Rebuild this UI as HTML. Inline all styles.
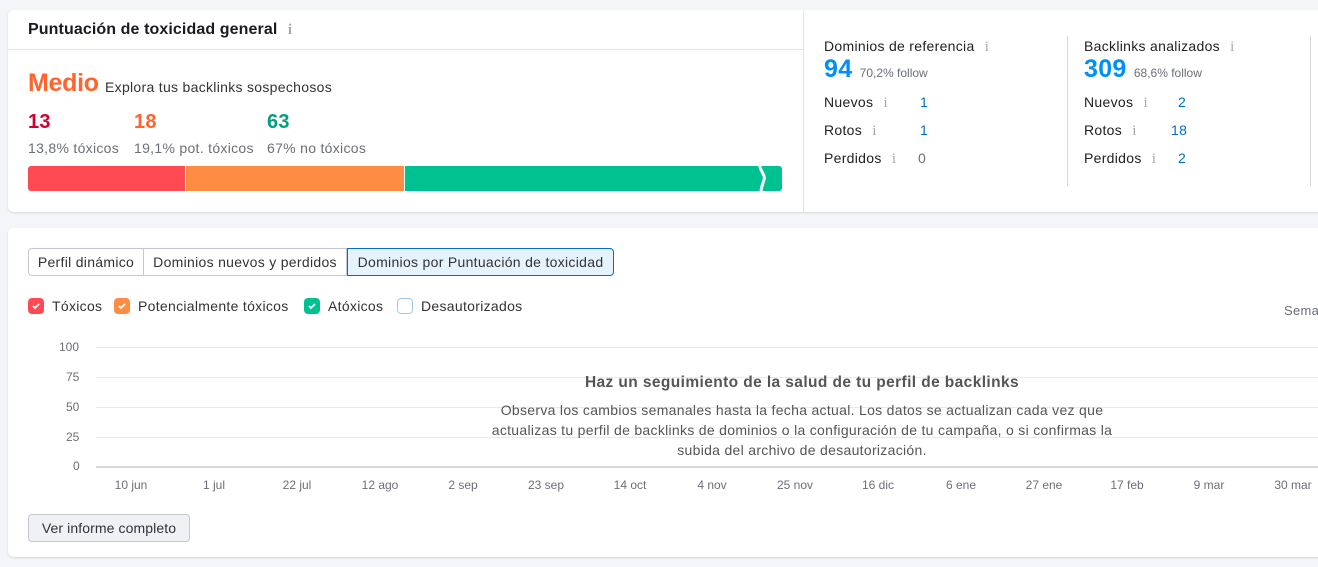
<!DOCTYPE html><html><head><meta charset="utf-8"><style>
*{margin:0;padding:0;box-sizing:border-box}
body{width:1318px;height:567px;background:#f4f5f9;font-family:"Liberation Sans",sans-serif;color:#222;position:relative;overflow:hidden;letter-spacing:.3px}
.a{position:absolute;white-space:nowrap}
.card{position:absolute;background:#fff;border-radius:6px;box-shadow:0 1px 2px rgba(0,0,0,.12)}
.i{color:#a6a9b2;font-family:"Liberation Serif",serif;font-size:15px;margin-left:6px}
.g{color:#6c6e79}
.bl{color:#006dca}
.cb{position:absolute;width:16px;height:16px;border-radius:4px;top:298px}
.cb svg{position:absolute;left:3px;top:3px}
.gl{position:absolute;left:96px;right:0;height:1px;background:#e8e9ee}
.xl{position:absolute;top:478px;font-size:12px;color:#6c6e79;transform:translateX(-50%);white-space:nowrap;letter-spacing:0}
.yl{position:absolute;font-size:12px;color:#6c6e79;letter-spacing:0}
</style></head><body>
<div class="card" style="left:8px;top:10px;width:1330px;height:202px"></div>
<div class="a" style="left:8px;top:49px;width:795px;height:1px;background:#e3e4e8"></div>
<div class="a" style="left:803px;top:10px;width:1px;height:202px;background:#e3e4e8"></div>
<div class="a" style="left:28px;top:21px;font-size:16px;font-weight:bold;color:#191b23;letter-spacing:.1px">Puntuación de toxicidad general <span class="i">i</span></div>
<div class="a" style="left:28px;top:69px;font-size:25px;font-weight:bold;color:#ff642d;letter-spacing:-.3px">Medio</div>
<div class="a" style="left:105px;top:79px;font-size:14px;color:#333">Explora tus backlinks sospechosos</div>
<div class="a" style="left:28px;top:111px;font-size:20px;font-weight:bold;color:#d1002f">13</div>
<div class="a" style="left:134px;top:111px;font-size:20px;font-weight:bold;color:#ff642d">18</div>
<div class="a" style="left:267px;top:111px;font-size:20px;font-weight:bold;color:#009f81">63</div>
<div class="a g" style="left:28px;top:140px;font-size:14px">13,8% tóxicos</div>
<div class="a g" style="left:134px;top:140px;font-size:14px">19,1% pot. tóxicos</div>
<div class="a g" style="left:267px;top:140px;font-size:14px">67% no tóxicos</div>
<div class="a" style="left:28px;top:166px;width:157px;height:25px;background:#ff4953;border-radius:3px 0 0 3px"></div>
<div class="a" style="left:186px;top:166px;width:218px;height:25px;background:#ff8c43"></div>
<div class="a" style="left:405px;top:166px;width:377px;height:25px;background:#00c291;border-radius:0 3px 3px 0"></div>
<svg class="a" style="left:752px;top:160px" width="20" height="38"><path d="M8 2 C6 10,14 14,12 20 C10 26,8 30,10 36" stroke="#fff" stroke-width="3" fill="none"/></svg>

<div class="a" style="left:824px;top:38px;font-size:14px;color:#222">Dominios de referencia <span class="i">i</span></div>
<div class="a" style="left:824px;top:55px;font-size:25px;font-weight:bold;color:#008ff8">94 <span style="font-size:12px;font-weight:normal;color:#6c6e79;letter-spacing:0">70,2% follow</span></div>
<div class="a" style="left:824px;top:94px;font-size:14px">Nuevos <span class="i">i</span></div><div class="a bl" style="left:920px;top:94px;font-size:14px">1</div>
<div class="a" style="left:824px;top:122px;font-size:14px">Rotos <span class="i">i</span></div><div class="a bl" style="left:920px;top:122px;font-size:14px">1</div>
<div class="a" style="left:824px;top:150px;font-size:14px">Perdidos <span class="i">i</span></div><div class="a g" style="left:918px;top:150px;font-size:14px">0</div>
<div class="a" style="left:1067px;top:36px;width:1px;height:150px;background:#d6d8de"></div>
<div class="a" style="left:1084px;top:38px;font-size:14px">Backlinks analizados <span class="i">i</span></div>
<div class="a" style="left:1084px;top:55px;font-size:25px;font-weight:bold;color:#008ff8">309 <span style="font-size:12px;font-weight:normal;color:#6c6e79;letter-spacing:0">68,6% follow</span></div>
<div class="a" style="left:1084px;top:94px;font-size:14px">Nuevos <span class="i">i</span></div><div class="a bl" style="left:1178px;top:94px;font-size:14px">2</div>
<div class="a" style="left:1084px;top:122px;font-size:14px">Rotos <span class="i">i</span></div><div class="a bl" style="left:1171px;top:122px;font-size:14px">18</div>
<div class="a" style="left:1084px;top:150px;font-size:14px">Perdidos <span class="i">i</span></div><div class="a bl" style="left:1178px;top:150px;font-size:14px">2</div>
<div class="a" style="left:1310px;top:36px;width:1px;height:150px;background:#d6d8de"></div>

<div class="card" style="left:8px;top:228px;width:1330px;height:329px"></div>
<div class="a" style="left:28px;top:248px;height:28px;display:flex;font-size:14px;color:#333">
<div style="width:116px;text-align:center;border:1px solid #c4c7cf;border-radius:4px 0 0 4px;line-height:26px">Perfil dinámico</div>
<div style="width:203px;text-align:center;border:1px solid #c4c7cf;border-left:none;line-height:26px">Dominios nuevos y perdidos</div>
<div style="width:267px;text-align:center;border:1px solid #006dca;background:#e5f3ff;border-radius:0 4px 4px 0;line-height:26px">Dominios por Puntuación de toxicidad</div></div>
<div class="cb" style="left:28px;background:#ff4953"><svg width="10" height="10"><path d="M2 5l2 2 4-4" stroke="#fff" stroke-width="1.8" fill="none"/></svg></div>
<div class="a" style="left:52px;top:298px;font-size:14px;color:#333">Tóxicos</div>
<div class="cb" style="left:114px;background:#ff8c43"><svg width="10" height="10"><path d="M2 5l2 2 4-4" stroke="#fff" stroke-width="1.8" fill="none"/></svg></div>
<div class="a" style="left:138px;top:298px;font-size:14px;color:#333">Potencialmente tóxicos</div>
<div class="cb" style="left:304px;background:#00c291"><svg width="10" height="10"><path d="M2 5l2 2 4-4" stroke="#fff" stroke-width="1.8" fill="none"/></svg></div>
<div class="a" style="left:328px;top:298px;font-size:14px;color:#333">Atóxicos</div>
<div class="cb" style="left:397px;border:1px solid #9bc9f4;background:#fff"></div>
<div class="a" style="left:421px;top:298px;font-size:14px;color:#333">Desautorizados</div>
<div class="a g" style="left:1284px;top:303px;font-size:13px">Semanas</div>

<div class="gl" style="top:347px"></div><div class="gl" style="top:377px"></div><div class="gl" style="top:407px"></div><div class="gl" style="top:437px"></div><div class="gl" style="top:466px;height:2px;background:#d6d8de"></div>
<div class="yl" style="top:340px;left:59px">100</div><div class="yl" style="top:370px;left:66px">75</div><div class="yl" style="top:400px;left:66px">50</div><div class="yl" style="top:430px;left:66px">25</div><div class="yl" style="top:459px;left:73px">0</div>
<div class="xl" style="left:131px">10 jun</div><div class="xl" style="left:214px">1 jul</div><div class="xl" style="left:297px">22 jul</div><div class="xl" style="left:380px">12 ago</div><div class="xl" style="left:463px">2 sep</div><div class="xl" style="left:546px">23 sep</div><div class="xl" style="left:630px">14 oct</div><div class="xl" style="left:712px">4 nov</div><div class="xl" style="left:795px">25 nov</div><div class="xl" style="left:878px">16 dic</div><div class="xl" style="left:961px">6 ene</div><div class="xl" style="left:1044px">27 ene</div><div class="xl" style="left:1127px">17 feb</div><div class="xl" style="left:1209px">9 mar</div><div class="xl" style="left:1293px">30 mar</div>
<div class="a" style="left:802px;top:374px;transform:translateX(-50%);font-size:15.5px;font-weight:bold;color:#555;letter-spacing:.4px">Haz un seguimiento de la salud de tu perfil de backlinks</div>
<div class="a" style="left:802px;top:400px;transform:translateX(-50%);font-size:14px;color:#555;text-align:center;line-height:20px;white-space:normal;width:645px">Observa los cambios semanales hasta la fecha actual. Los datos se actualizan cada vez que actualizas tu perfil de backlinks de dominios o la configuración de tu campaña, o si confirmas la subida del archivo de desautorización.</div>
<div class="a" style="left:28px;top:514px;width:162px;height:28px;border:1px solid #c4c7cf;border-radius:4px;background:#f0f1f4;font-size:14px;color:#333;line-height:26px;text-align:center;letter-spacing:.1px">Ver informe completo</div>
</body></html>
